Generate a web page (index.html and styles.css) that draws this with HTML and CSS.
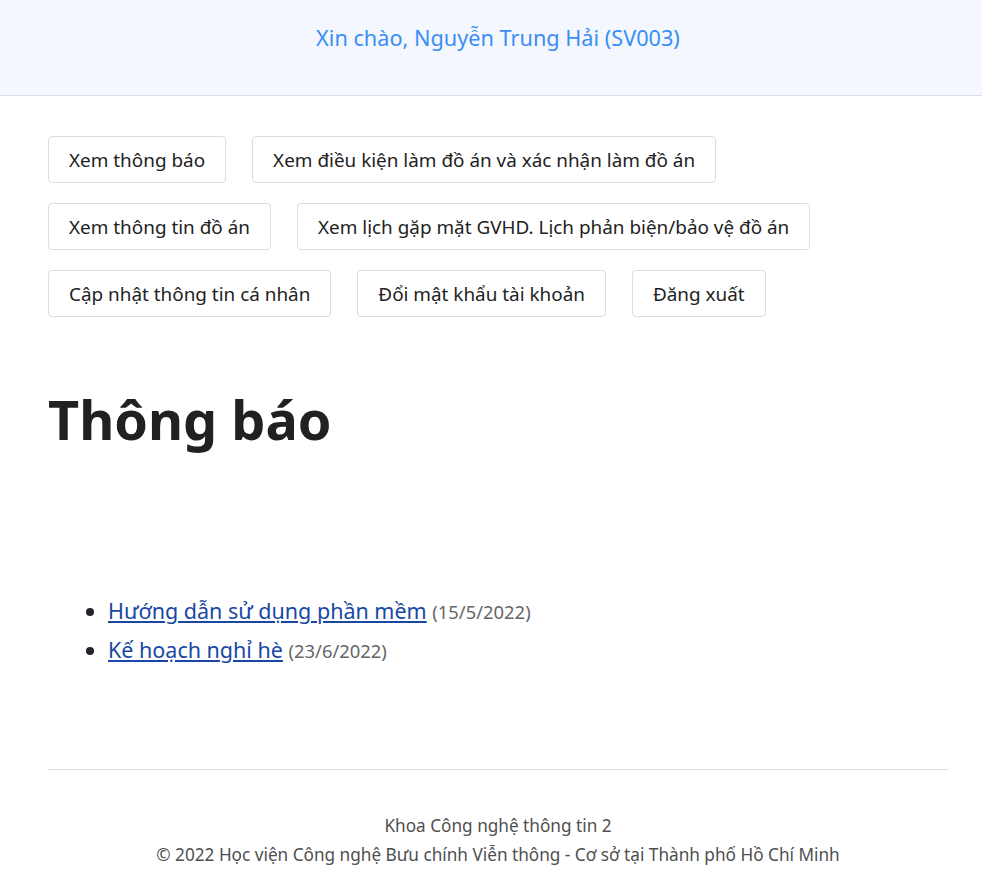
FILE: index.html
```html
<!DOCTYPE html>
<html lang="vi">
<head>
<meta charset="utf-8">
<title>Thông báo</title>
<link rel="stylesheet" href="styles.css">
</head>
<body>
<header class="top">
  <div class="greet">Xin chào, Nguyễn Trung Hải (SV003)</div>
</header>
<main class="page">
  <nav class="menu">
    <div class="row">
      <a class="btn" href="#">Xem thông báo</a>
      <a class="btn" href="#">Xem điều kiện làm đồ án và xác nhận làm đồ án</a>
    </div>
    <div class="row">
      <a class="btn" href="#">Xem thông tin đồ án</a>
      <a class="btn" href="#">Xem lịch gặp mặt GVHD. Lịch phản biện/bảo vệ đồ án</a>
    </div>
    <div class="row">
      <a class="btn" href="#">Cập nhật thông tin cá nhân</a>
      <a class="btn" href="#">Đổi mật khẩu tài khoản</a>
      <a class="btn" href="#">Đăng xuất</a>
    </div>
  </nav>
  <h1 class="title">Thông báo</h1>
  <ul class="news">
    <li><a href="#">Hướng dẫn sử dụng phần mềm</a> <span class="date">(15/5/2022)</span></li>
    <li><a href="#">Kế hoạch nghỉ hè</a> <span class="date">(23/6/2022)</span></li>
  </ul>
  <footer class="foot">
    <div>Khoa Công nghệ thông tin 2</div>
    <div>© 2022 Học viện Công nghệ Bưu chính Viễn thông - Cơ sở tại Thành phố Hồ Chí Minh</div>
  </footer>
</main>
</body>
</html>
```
FILE: styles.css
```css
* { box-sizing: border-box; }
html, body { margin: 0; padding: 0; }
body {
  font-family: "Noto Sans", "Open Sans", sans-serif;
  color: #212529;
  background: #fff;
}
.top {
  height: 96px;
  background: #f4f7fe;
  border-bottom: 1px solid #dcdfe6;
  display: flex;
  align-items: center;
  justify-content: center;
  padding-left: 14px;
  padding-bottom: 20px;
}
.greet {
  color: #3a8ef6;
  font-size: 21.7px;
}
.page {
  width: 900px;
  margin-left: 48px;
  padding-top: 40px;
}
.menu { display: flex; flex-direction: column; gap: 20px; }
.row { display: flex; gap: 26px; }
.btn {
  display: inline-flex;
  align-items: center;
  height: 47px;
  padding: 0 20px;
  border: 1px solid #dcdde3;
  border-radius: 4px;
  font-size: 18.9px;
  color: #222;
  text-decoration: none;
}
.title {
  font-size: 54px;
  font-weight: 700;
  margin: 62px 0 0;
  line-height: 80px;
  color: #212121;
}
.news {
  margin: 133px 0 0;
  padding-left: 60px;
  font-size: 21.5px;
  line-height: 38px;
}
.news a { color: #1848a3; }
.date { font-size: 18.4px; color: #666; }
.foot {
  margin-top: 99px;
  border-top: 1px solid #dcdcdc;
  padding-top: 41px;
  text-align: center;
  font-size: 17.2px;
  color: #4f4f4f;
  line-height: 29px;
}
```
